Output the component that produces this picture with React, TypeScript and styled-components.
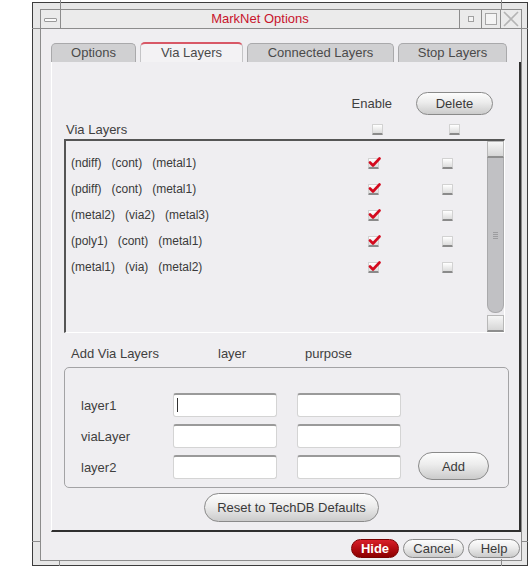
import React from "react";
import styled, { createGlobalStyle, css } from "styled-components";

const GlobalStyle = createGlobalStyle`
  html, body {
    margin: 0;
    background: #ffffff;
  }
  body {
    padding: 2px 0 0 32px;
    font-family: "Liberation Sans", Arial, sans-serif;
    color: #3a3a3a;
  }
`;

const Frame = styled.div`
  position: relative;
  box-sizing: border-box;
  width: 496px;
  height: 564px;
  padding: 6px 5px 4px 7px;
  border: 1px solid #3c3c3c;
  background: #e7e7e7;
  display: flex;
`;

// resize-handle marks on the window frame
const Tick = styled.span<{ $v?: boolean }>`
  position: absolute;
  background: #8c8c8c;
  ${(p) => (p.$v ? "width: 1px;" : "height: 1px;")}
`;

const Inner = styled.div`
  flex: 1;
  display: flex;
  flex-direction: column;
  border: 1px solid #8c8c8c;
`;

const TitleBar = styled.div`
  display: flex;
  height: 18px;
  border-bottom: 1px solid #8c8c8c;
  background: #ebebeb;
`;

const TitleButton = styled.div<{ $w: number }>`
  width: ${(p) => p.$w}px;
  display: flex;
  align-items: center;
  justify-content: center;
  border-left: 1px solid #8c8c8c;
  &:first-child {
    border-left: none;
    border-right: 1px solid #8c8c8c;
  }
`;

const MenuBar = styled.span`
  width: 11px;
  height: 2px;
  border: 1px solid #9a9a9a;
  border-radius: 1px;
  background: #fafafa;
  margin-top: 2px;
`;

const Title = styled.div`
  flex: 1;
  text-align: center;
  font-size: 13px;
  line-height: 18px;
  color: #c8142c;
`;

const Body = styled.div`
  flex: 1;
  display: flex;
  flex-direction: column;
  padding: 13px 0 2px 10px;
  background: #efeef1;
`;

const TabRow = styled.div`
  display: flex;
  align-items: flex-end;
  gap: 4px;
  height: 20px;
`;

const Tab = styled.div<{ $w: number; $active?: boolean }>`
  box-sizing: border-box;
  width: ${(p) => p.$w}px;
  height: 19px;
  border: 1px solid #a9a9ab;
  border-bottom: none;
  border-radius: 5px 5px 0 0;
  background: #d0d0d2;
  font-size: 13px;
  line-height: 18px;
  text-align: center;
  color: #4a4a4a;
  ${(p) =>
    p.$active &&
    css`
      height: 21px;
      margin-bottom: -1px;
      border-top: 2px solid #d85866;
      border-color: #d85866 #c4c4c6 transparent #c4c4c6;
      background: #f3f2f4;
      line-height: 17px;
    `}
`;

const Panel = styled.div`
  box-sizing: border-box;
  width: 470px;
  height: 470px;
  display: flex;
  flex-direction: column;
  padding: 30px 0 0 12px;
  border-left: 1px solid #ffffff;
  border-right: 2px solid #2f2f2f;
  border-bottom: 2px solid #2f2f2f;
  background: #efeef1;
`;

const EnableRow = styled.div`
  display: flex;
  align-items: center;
  justify-content: flex-end;
  gap: 24px;
  width: 429px;
  height: 23px;
`;

const Label = styled.span<{ $w?: number }>`
  font-size: 13px;
  color: #3f3f3f;
  ${(p) => p.$w && `width: ${p.$w}px; flex: none;`}
`;

const PillButton = styled.button<{ $w: number; $h: number; $primary?: boolean }>`
  box-sizing: border-box;
  width: ${(p) => p.$w}px;
  height: ${(p) => p.$h}px;
  padding: 0;
  border: 1px solid #8a8a8a;
  border-radius: ${(p) => Math.round(p.$h / 2)}px;
  background: linear-gradient(#fdfdfd 0%, #ececec 45%, #cbcbcb 100%);
  font-family: "Liberation Sans", Arial, sans-serif;
  font-size: 13px;
  color: #3a3a3a;
  ${(p) =>
    p.$primary &&
    css`
      border-color: #7a0000;
      background: linear-gradient(#d8202a 0%, #b40c12 50%, #8c0000 100%);
      color: #ffffff;
      font-weight: bold;
    `}
`;

const HeadRow = styled.div`
  display: grid;
  grid-template-columns: 306px 11px 66px 11px;
  align-items: center;
  height: 16px;
  margin-top: 6px;
  padding-left: 2px;
`;

const Box = styled.span<{ $checked?: boolean }>`
  position: relative;
  box-sizing: border-box;
  width: 11px;
  height: 11px;
  border: 1px solid #d2d2d2;
  border-bottom: 2px solid #8a8a8a;
  border-radius: 1px;
  background: linear-gradient(#ffffff, #dcdcdc);
  svg {
    position: absolute;
    left: -1px;
    top: -3px;
  }
`;

const ListBox = styled.div`
  box-sizing: border-box;
  display: flex;
  width: 441px;
  height: 194px;
  margin-top: 2px;
  border-top: 2px solid #555;
  border-left: 2px solid #555;
  border-bottom: 1px solid #ffffff;
  border-right: 1px solid #ffffff;
`;

const ListBody = styled.div`
  flex: 1;
  padding-top: 9px;
`;

const ListRow = styled.div`
  display: grid;
  grid-template-columns: 297px 11px 63px 11px;
  align-items: center;
  height: 26px;
  padding-left: 5px;
  font-size: 12px;
  color: #3a3a3a;
  white-space: pre;
`;

const ScrollBar = styled.div`
  width: 17px;
  display: flex;
  flex-direction: column;
  background: #ecebee;
`;

const ScrollButton = styled.div<{ $h: number }>`
  height: ${(p) => p.$h}px;
  border: 1px solid #b8b8b8;
  border-bottom: 2px solid #8e8e8e;
  background: linear-gradient(#f6f6f6, #d6d6d6);
`;

const Thumb = styled.div`
  flex: 1;
  margin-bottom: 2px;
  border: 1px solid #a9a9ab;
  border-top: none;
  border-radius: 0 0 8px 8px;
  background: #c1c1c4;
  display: flex;
  align-items: center;
  justify-content: center;
`;

const Grip = styled.span`
  width: 5px;
  height: 7px;
  background: repeating-linear-gradient(#9c9c9f 0 1px, transparent 1px 2px);
`;

const AddHead = styled.div`
  display: grid;
  grid-template-columns: 147px 87px auto;
  height: 16px;
  margin-top: 12px;
  padding-left: 7px;
  align-items: center;
`;

const Group = styled.div`
  box-sizing: border-box;
  display: flex;
  flex-direction: column;
  gap: 7px;
  width: 445px;
  height: 121px;
  margin-top: 6px;
  padding: 25px 0 0 16px;
  border: 1px solid #a3a3a5;
  border-radius: 5px;
`;

const FieldRow = styled.div`
  display: flex;
  align-items: center;
  gap: 20px;
  height: 24px;
`;

const Field = styled.div<{ $caret?: boolean }>`
  box-sizing: border-box;
  flex: none;
  width: 104px;
  height: 24px;
  border: 1px solid #d4d4d4;
  border-top: 2px solid #9a9a9a;
  border-radius: 3px;
  background: #ffffff;
  padding: 3px 0 0 3px;
  ${(p) =>
    p.$caret &&
    css`
      &::before {
        content: "";
        display: block;
        width: 1px;
        height: 14px;
        background: #333;
      }
    `}
`;

const AddSlot = styled.div`
  align-self: flex-end;
  margin-left: -3px;
  margin-bottom: -1px;
`;

const ResetWrap = styled.div`
  display: flex;
  justify-content: center;
  margin-top: 5px;
`;

const Footer = styled.div`
  display: flex;
  justify-content: flex-end;
  gap: 4px;
  margin-top: 7px;
  padding-right: 1px;
`;

const Check = () => (
  <svg width="13" height="12" viewBox="0 0 13 12">
    <path d="M2 6.5 L5 9.5 L11.5 2.5" fill="none" stroke="#d40a1e" strokeWidth="2.6" strokeLinecap="round" strokeLinejoin="round" />
  </svg>
);

const rows = [
  ["(ndiff)", "(cont)", "(metal1)"],
  ["(pdiff)", "(cont)", "(metal1)"],
  ["(metal2)", "(via2)", "(metal3)"],
  ["(poly1)", "(cont)", "(metal1)"],
  ["(metal1)", "(via)", "(metal2)"],
];

const fields = ["layer1", "viaLayer", "layer2"];

export default function App() {
  return (
    <>
      <GlobalStyle />
      <Frame>
        <Tick $v style={{ left: 27, top: -3, height: 9 }} />
        <Tick $v style={{ left: 468, top: -3, height: 9 }} />
        <Tick $v style={{ left: 26, bottom: -1, height: 5 }} />
        <Tick $v style={{ left: 468, bottom: -1, height: 7 }} />
        <Tick style={{ left: -1, top: 25, width: 8 }} />
        <Tick style={{ right: -1, top: 25, width: 6 }} />
        <Tick style={{ left: -1, top: 538, width: 8 }} />
        <Tick style={{ right: -1, top: 538, width: 6 }} />
        <Inner>
          <TitleBar>
            <TitleButton $w={19}>
              <MenuBar />
            </TitleButton>
            <Title>MarkNet Options</Title>
            <TitleButton $w={21}>
              <svg width="6" height="6" viewBox="0 0 6 6">
                <rect x="0.5" y="0.5" width="5" height="5" fill="#f4f4f4" stroke="#a0a0a0" />
              </svg>
            </TitleButton>
            <TitleButton $w={18}>
              <svg width="12" height="12" viewBox="0 0 12 12">
                <rect x="0.5" y="0.5" width="11" height="11" fill="#f4f4f4" stroke="#a6a6a6" />
              </svg>
            </TitleButton>
            <TitleButton $w={20}>
              <svg width="16" height="16" viewBox="0 0 16 16">
                <path d="M1 1 L15 15 M15 1 L1 15" stroke="#b4b4b4" strokeWidth="1.6" />
              </svg>
            </TitleButton>
          </TitleBar>
          <Body>
            <TabRow>
              <Tab $w={85}>Options</Tab>
              <Tab $w={103} $active>Via Layers</Tab>
              <Tab $w={147}>Connected Layers</Tab>
              <Tab $w={109}>Stop Layers</Tab>
            </TabRow>
            <Panel>
              <EnableRow>
                <Label>Enable</Label>
                <PillButton $w={77} $h={23}>Delete</PillButton>
              </EnableRow>
              <HeadRow>
                <Label>Via Layers</Label>
                <Box />
                <span />
                <Box />
              </HeadRow>
              <ListBox>
                <ListBody>
                  {rows.map((r, i) => (
                    <ListRow key={i}>
                      <span>{r.join("   ")}</span>
                      <Box $checked>
                        <Check />
                      </Box>
                      <span />
                      <Box />
                    </ListRow>
                  ))}
                </ListBody>
                <ScrollBar>
                  <ScrollButton $h={14} />
                  <Thumb>
                    <Grip />
                  </Thumb>
                  <ScrollButton $h={14} />
                </ScrollBar>
              </ListBox>
              <AddHead>
                <Label>Add Via Layers</Label>
                <Label>layer</Label>
                <Label>purpose</Label>
              </AddHead>
              <Group>
                {fields.map((f, i) => (
                  <FieldRow key={f}>
                    <Label $w={72}>{f}</Label>
                    <Field $caret={i === 0} />
                    <Field />
                    {i === fields.length - 1 && (
                      <AddSlot>
                        <PillButton $w={71} $h={28}>Add</PillButton>
                      </AddSlot>
                    )}
                  </FieldRow>
                ))}
              </Group>
              <ResetWrap>
                <PillButton $w={175} $h={29}>Reset to TechDB Defaults</PillButton>
              </ResetWrap>
            </Panel>
            <Footer>
              <PillButton $w={48} $h={19} $primary>Hide</PillButton>
              <PillButton $w={61} $h={19}>Cancel</PillButton>
              <PillButton $w={52} $h={19}>Help</PillButton>
            </Footer>
          </Body>
        </Inner>
      </Frame>
    </>
  );
}
